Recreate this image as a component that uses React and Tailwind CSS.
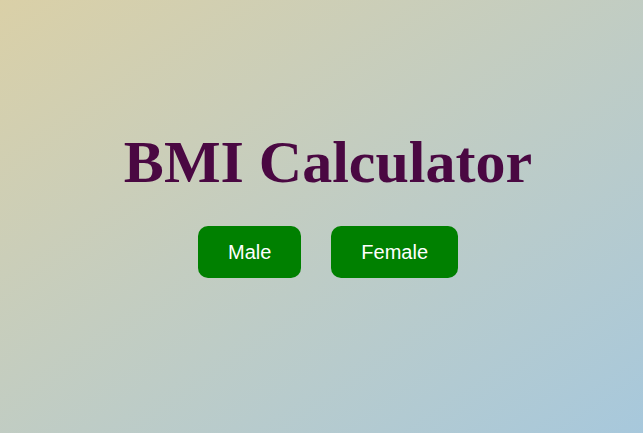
export default function App() {
  return (
    <div className="min-h-screen w-full bg-gradient-to-br from-[#dad0a7] to-[#a7c8dc] flex flex-col items-center pt-[128px] pl-[13px]">
      <h1 className="text-[60px] leading-[69px] font-bold text-[#4a0842] font-['Liberation_Serif','Times_New_Roman',serif]">
        BMI Calculator
      </h1>
      <div className="mt-[29px] flex gap-[30px] font-['Liberation_Sans',Arial,sans-serif]">
        <button className="h-[52px] px-[30px] rounded-[10px] bg-[#008000] text-white text-[20px]">
          Male
        </button>
        <button className="h-[52px] px-[30px] rounded-[10px] bg-[#008000] text-white text-[20px]">
          Female
        </button>
      </div>
    </div>
  );
}
